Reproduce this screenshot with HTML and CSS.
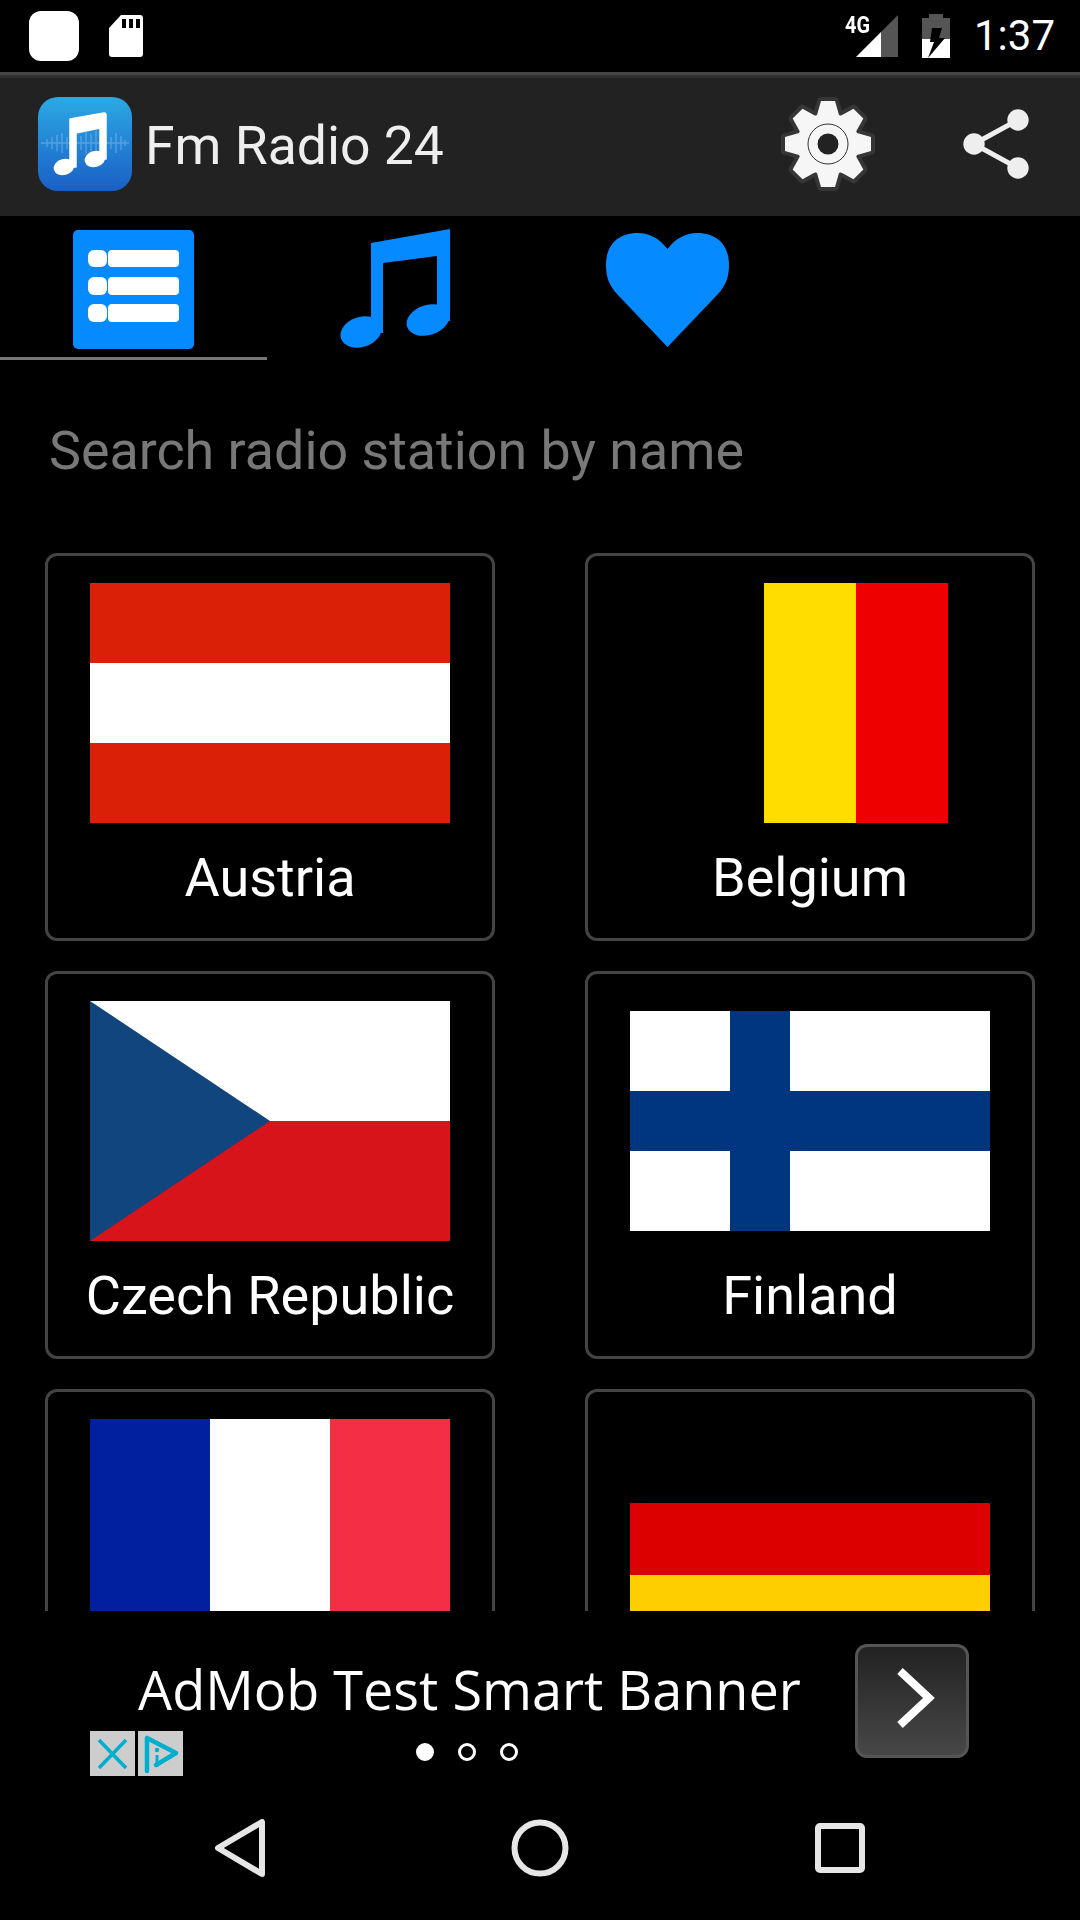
FILE: index.html
```html
<!DOCTYPE html>
<html lang="en">
<head>
    <meta charset="UTF-8">
    <meta name="viewport" content="width=device-width, initial-scale=1.0">
    <title>Fm Radio 24</title>
    <link rel="stylesheet" href="styles.css">
</head>
<body>
    <header class="status-bar">
        <div class="status-left">
            <span class="status-square"></span>
            <svg class="status-sd" width="34" height="42" viewBox="0 0 34 42">
                <path d="M12 0H31Q34 0 34 3V39Q34 42 31 42H3Q0 42 0 39V13Z" fill="#fff"/>
                <path d="M13 4h4v9h-4zM20 4h4v9h-4zM27 4h4v9h-4z" fill="#000"/>
            </svg>
        </div>
        <div class="status-right">
            <div class="status-signal">
                <svg width="53" height="42" viewBox="0 0 53 42">
                    <path d="M36 42V17L53 0V42Z" fill="#555"/>
                    <path d="M11 42L36 17V42Z" fill="#fff"/>
                </svg>
                <span class="signal-label">4G</span>
            </div>
            <svg class="status-battery" width="28" height="44" viewBox="0 0 28 44">
                <path d="M7 0H21V4H28V25H0V4H7Z" fill="#555"/>
                <path d="M0 25H28V44H0Z" fill="#fff"/>
                <path d="M10 14H20L17 24H23L6 44L12 28H8Z" fill="#000"/>
            </svg>
            <span class="status-time">1:37</span>
        </div>
    </header>

    <div class="app-bar">
        <svg class="app-logo" width="94" height="94" viewBox="0 0 94 94">
            <defs>
                <linearGradient id="logoBg" x1="0" y1="0" x2="0" y2="1">
                    <stop offset="0" stop-color="#2ca9e4"/>
                    <stop offset="1" stop-color="#1a5fc6"/>
                </linearGradient>
            </defs>
            <rect width="94" height="94" rx="20" fill="url(#logoBg)"/>
            <path d="M3 46H91M9 42V50M14 40V52M19 38V54M24 36V56M29 40V52M43 39V53M48 35V57M53 37V55M58 34V58M73 40V52M78 36V56M83 39V53M87 43V49" stroke="#fff" stroke-opacity=".22" stroke-width="1.5" fill="none"/>
            <path d="M32 22L66 16Q68 16 68 18V62H62V31L38 36V70H32Z" fill="#fff" stroke="#fff" stroke-width="1.5" stroke-linejoin="round"/>
            <ellipse cx="26" cy="70" rx="10.5" ry="8" transform="rotate(-15 26 70)" fill="#fff"/>
            <ellipse cx="57" cy="62" rx="10.5" ry="8" transform="rotate(-15 57 62)" fill="#fff"/>
        </svg>
        <h1 class="app-title">Fm Radio 24</h1>
        <div class="bar-actions">
            <svg width="96" height="96" viewBox="-48 -48 96 96">
                <defs>
                    <polygon id="gearTooth" points="-7,-43 7,-43 11,-29 11,29 7,43 -7,43 -11,29 -11,-29"/>
                </defs>
                <g fill="#363636" stroke="#363636" stroke-width="8" stroke-linejoin="round">
                    <circle r="31"/>
                    <use href="#gearTooth"/>
                    <use href="#gearTooth" transform="rotate(45)"/>
                    <use href="#gearTooth" transform="rotate(90)"/>
                    <use href="#gearTooth" transform="rotate(135)"/>
                </g>
                <g fill="#f6f6f6">
                    <circle r="31"/>
                    <use href="#gearTooth"/>
                    <use href="#gearTooth" transform="rotate(45)"/>
                    <use href="#gearTooth" transform="rotate(90)"/>
                    <use href="#gearTooth" transform="rotate(135)"/>
                </g>
                <circle r="20" fill="none" stroke="#333" stroke-width="1"/>
                <circle r="10.5" fill="#222"/>
            </svg>
            <svg width="66" height="72" viewBox="0 0 66 72">
                <path d="M55 12L11 36L55 60" fill="none" stroke="#eee" stroke-width="5"/>
                <circle cx="55" cy="12" r="10.7" fill="#eee"/>
                <circle cx="11" cy="36" r="10.7" fill="#eee"/>
                <circle cx="55" cy="60" r="10.7" fill="#eee"/>
            </svg>
        </div>
    </div>

    <nav class="tabs">
        <div class="tab active">
            <svg class="tab-icon icon-list" width="121" height="119" viewBox="0 0 121 119">
                <rect width="121" height="119" rx="5" fill="#058bff"/>
                <g fill="#fff">
                    <rect x="15" y="20" width="19" height="17" rx="6"/>
                    <rect x="35" y="20" width="71" height="17" rx="4"/>
                    <rect x="15" y="47" width="19" height="18" rx="6"/>
                    <rect x="35" y="47" width="71" height="18" rx="4"/>
                    <rect x="15" y="74" width="19" height="18" rx="6"/>
                    <rect x="35" y="74" width="71" height="18" rx="4"/>
                </g>
            </svg>
        </div>
        <div class="tab">
            <svg class="tab-icon icon-note" width="110" height="120" viewBox="0 0 110 120">
                <path d="M31 14L110 0V92H97V27L43 34V104H31Z" fill="#058bff"/>
                <ellipse cx="21" cy="103" rx="21" ry="15" transform="rotate(-18 21 103)" fill="#058bff"/>
                <ellipse cx="88" cy="91" rx="22" ry="15" transform="rotate(-18 88 91)" fill="#058bff"/>
            </svg>
        </div>
        <div class="tab">
            <svg class="tab-icon icon-heart" width="123" height="114" viewBox="0 0 123 114">
                <path d="M61.5 16C53 5 43 0 32 0C12 0 0 12 0 32C0 44 3 52 11 61L61.5 114L112 61C120 52 123 44 123 32C123 12 111 0 91 0C80 0 70 5 61.5 16Z" fill="#058bff"/>
            </svg>
        </div>
    </nav>

    <div class="search">Search radio station by name</div>

    <main class="country-list">
        <div class="country-grid">
            <div class="country-card">
                <div class="flag-box">
                    <svg width="360" height="240" viewBox="0 0 360 240">
                        <rect width="360" height="240" fill="#d82106"/>
                        <rect y="80" width="360" height="80" fill="#fff"/>
                    </svg>
                </div>
                <div class="country-name">Austria</div>
            </div>
            <div class="country-card">
                <div class="flag-box">
                    <svg width="276" height="240" viewBox="0 0 276 240">
                        <rect width="92" height="240" fill="#000"/>
                        <rect x="92" width="92" height="240" fill="#ffdd00"/>
                        <rect x="184" width="92" height="240" fill="#ee0000"/>
                    </svg>
                </div>
                <div class="country-name">Belgium</div>
            </div>
            <div class="country-card">
                <div class="flag-box">
                    <svg width="360" height="240" viewBox="0 0 360 240">
                        <rect width="360" height="120" fill="#fff"/>
                        <rect y="120" width="360" height="120" fill="#d7141a"/>
                        <polygon points="0,0 180,120 0,240" fill="#11457e"/>
                    </svg>
                </div>
                <div class="country-name">Czech Republic</div>
            </div>
            <div class="country-card">
                <div class="flag-box">
                    <svg width="360" height="220" viewBox="0 0 360 220">
                        <rect width="360" height="220" fill="#fff"/>
                        <rect x="100" width="60" height="220" fill="#003580"/>
                        <rect y="80" width="360" height="60" fill="#003580"/>
                    </svg>
                </div>
                <div class="country-name">Finland</div>
            </div>
            <div class="country-card">
                <div class="flag-box">
                    <svg width="360" height="240" viewBox="0 0 360 240">
                        <rect width="120" height="240" fill="#00209f"/>
                        <rect x="120" width="120" height="240" fill="#fff"/>
                        <rect x="240" width="120" height="240" fill="#f42f45"/>
                    </svg>
                </div>
            </div>
            <div class="country-card">
                <div class="flag-box">
                    <svg width="360" height="216" viewBox="0 0 360 216">
                        <rect width="360" height="72" fill="#000"/>
                        <rect y="72" width="360" height="72" fill="#dd0000"/>
                        <rect y="144" width="360" height="72" fill="#ffce00"/>
                    </svg>
                </div>
            </div>
        </div>
    </main>

    <aside class="ad">
        <div class="ad-copy">
            <div class="ad-text">AdMob Test Smart Banner</div>
            <div class="ad-dots">
                <span class="ad-dot on"></span>
                <span class="ad-dot"></span>
                <span class="ad-dot"></span>
            </div>
        </div>
        <div class="ad-button">
            <svg class="ad-chevron" width="38" height="60" viewBox="0 0 38 60">
                <path d="M3 3L32 30L3 57" fill="none" stroke="#fff" stroke-width="8"/>
            </svg>
        </div>
        <div class="ad-choices">
            <svg class="ad-choice" width="45" height="45" viewBox="0 0 45 45">
                <path d="M9 9L36 37M36 9L9 37" stroke="#00aecd" stroke-width="3.5" fill="none"/>
            </svg>
            <svg class="ad-choice" width="45" height="45" viewBox="0 0 45 45">
                <path d="M9 7L38 22L18 34M9 7V40" stroke="#00aecd" stroke-width="4.5" stroke-linejoin="round" stroke-linecap="round" fill="none"/>
                <path d="M19 24V36" stroke="#00aecd" stroke-width="3" fill="none"/>
                <circle cx="19" cy="19" r="2.2" fill="#00aecd"/>
            </svg>
        </div>
    </aside>

    <footer class="nav-bar">
        <svg width="50" height="58" viewBox="0 0 50 58">
            <path d="M47 3V55L3 29Z" fill="none" stroke="#e6e6e6" stroke-width="6" stroke-linejoin="round"/>
        </svg>
        <svg width="58" height="58" viewBox="0 0 58 58">
            <circle cx="29" cy="29" r="25.5" fill="none" stroke="#e6e6e6" stroke-width="6"/>
        </svg>
        <svg width="50" height="50" viewBox="0 0 50 50">
            <rect x="3" y="3" width="44" height="44" rx="2" fill="none" stroke="#e6e6e6" stroke-width="6"/>
        </svg>
    </footer>
</body>
</html>
```

FILE: styles.css
```css
* {
    margin: 0;
    padding: 0;
    box-sizing: border-box;
}
body {
    width: 1080px;
    height: 1920px;
    overflow: hidden;
    background-color: #000;
    color: #fff;
    font-family: Roboto, sans-serif;
    display: flex;
    flex-direction: column;
}
svg {
    display: block;
    flex-shrink: 0;
}

/* status bar */
.status-bar {
    height: 72px;
    padding: 0 25px 0 29px;
    display: flex;
    align-items: center;
    justify-content: space-between;
}
.status-left {
    display: flex;
    align-items: center;
    gap: 30px;
}
.status-square {
    width: 50px;
    height: 50px;
    background-color: #fff;
    border-radius: 12px;
}
.status-right {
    display: flex;
    align-items: center;
    gap: 24px;
}
.status-signal {
    position: relative;
}
.signal-label {
    position: absolute;
    left: 0;
    top: -2px;
    font-weight: 700;
    font-size: 24px;
    line-height: 24px;
    transform: scaleX(0.83);
    transform-origin: left;
}
.status-time {
    font-size: 42px;
    line-height: 48px;
}

/* app bar */
.app-bar {
    height: 144px;
    border-top: 3px solid #444;
    box-shadow: inset 0 3px #303030;
    padding: 3px 51px 6px 38px;
    background-color: #222;
    display: flex;
    align-items: center;
}
.app-title {
    margin-left: 13px;
    font-size: 53.5px;
    line-height: 64px;
    font-weight: 400;
    color: #eee;
    position: relative;
    top: 2px;
}
.bar-actions {
    margin-left: auto;
    display: flex;
    align-items: center;
    gap: 87px;
}

/* tabs */
.tabs {
    height: 144px;
    display: flex;
}
.tab {
    width: 267px;
    height: 144px;
    display: flex;
    justify-content: center;
    padding-top: 13px;
}
.tab.active {
    border-bottom: 3px solid #777;
}
.tab-icon {
    filter: blur(0.7px);
}
.icon-list {
    margin-top: 1px;
}
.icon-note {
    margin-right: 12px;
}
.icon-heart {
    margin-top: 4px;
}

/* search */
.search {
    height: 193px;
    padding: 61px 0 0 49px;
    font-size: 53.8px;
    line-height: 60px;
    color: #787878;
}

/* country grid */
.country-list {
    flex: 1;
    overflow: hidden;
    padding: 0 45px;
}
.country-grid {
    display: grid;
    grid-template-columns: 450px 450px;
    column-gap: 90px;
    row-gap: 30px;
}
.country-card {
    height: 388px;
    border: 3px solid #444;
    border-radius: 12px;
    padding-top: 27px;
}
.flag-box {
    height: 240px;
    display: flex;
    align-items: center;
    justify-content: center;
}
.country-name {
    margin-top: 23px;
    font-size: 54px;
    line-height: 64px;
    text-align: center;
    color: #fff;
}

/* ad banner */
.ad {
    position: relative;
    height: 189px;
    padding: 33px 0 0 138px;
    display: flex;
    align-items: flex-start;
}
.ad-copy {
    width: 663px;
    margin-right: 54px;
    padding-top: 10px;
}
.ad-text {
    font-family: "Open Sans", sans-serif;
    font-size: 54px;
    line-height: 70px;
    white-space: nowrap;
}
.ad-dots {
    margin-top: 19px;
    padding-right: 5px;
    display: flex;
    justify-content: center;
    gap: 24px;
}
.ad-dot {
    width: 18px;
    height: 18px;
    border: 3px solid #fff;
    border-radius: 50%;
}
.ad-dot.on {
    background-color: #fff;
}
.ad-button {
    width: 114px;
    height: 114px;
    border: 3px solid #555;
    border-radius: 12px;
    background: linear-gradient(#222, #484848);
    display: flex;
    align-items: center;
    justify-content: center;
}
.ad-chevron {
    margin: 0 0 6px 8px;
}
.ad-choices {
    position: absolute;
    left: 90px;
    top: 120px;
    display: flex;
    gap: 3px;
}
.ad-choice {
    background-color: #cdcdcd;
}

/* system navigation */
.nav-bar {
    height: 120px;
    padding: 0 90px 24px;
    display: grid;
    grid-template-columns: repeat(3, 300px);
    justify-items: center;
    align-items: center;
}
```
